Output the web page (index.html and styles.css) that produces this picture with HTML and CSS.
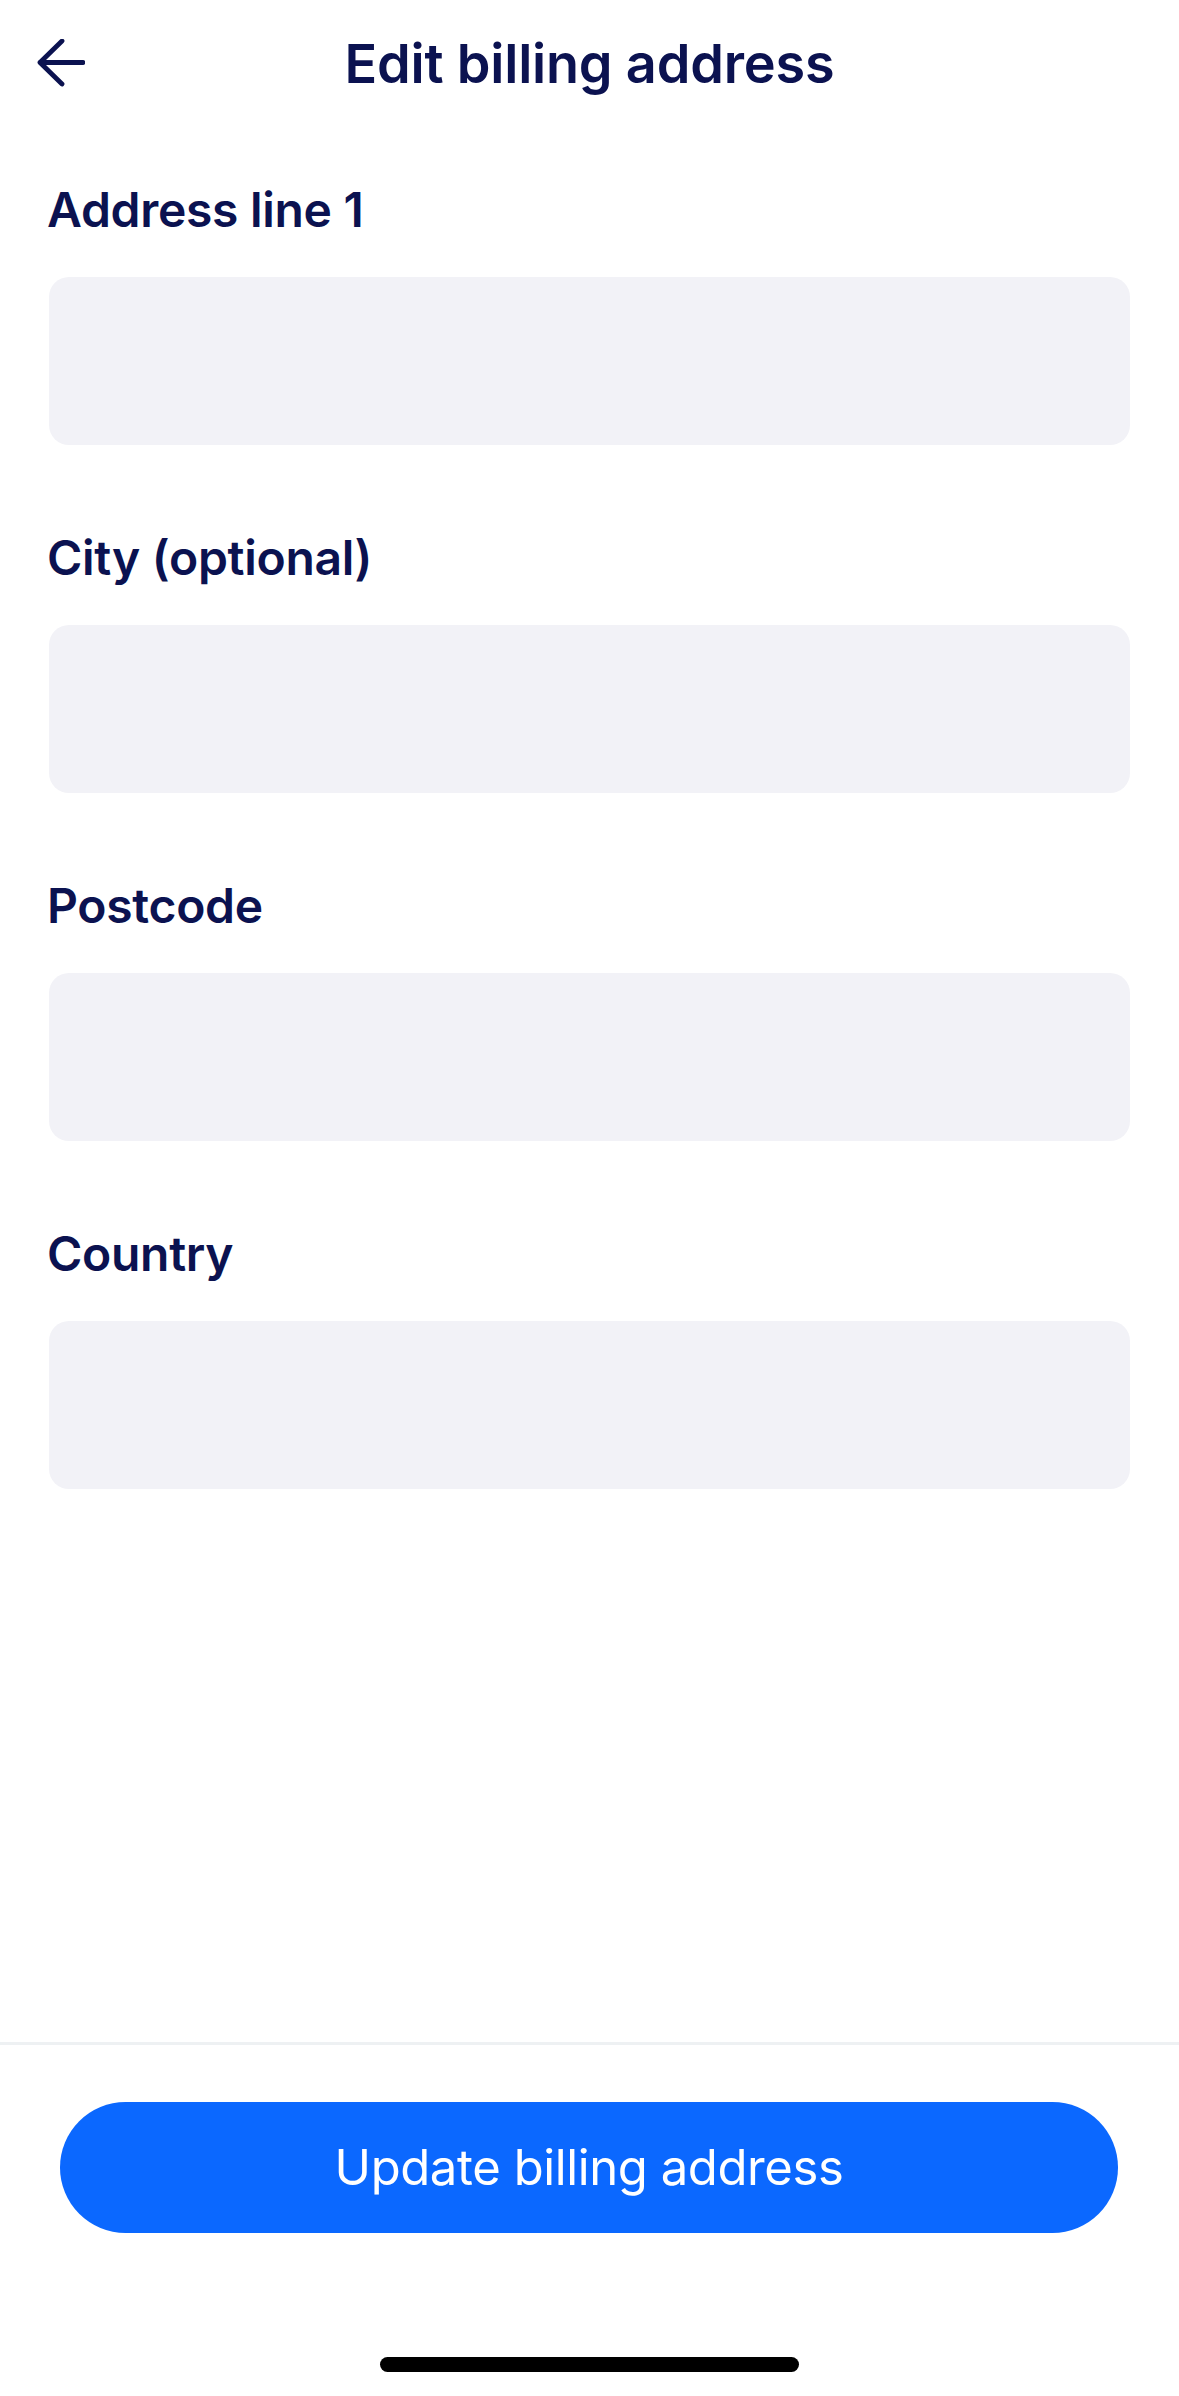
FILE: index.html
```html
<!DOCTYPE html>
<html lang="en">
<head>
<meta charset="utf-8">
<title>Edit billing address</title>
<link rel="stylesheet" href="styles.css">
</head>
<body>
<div class="screen">
  <main class="content">
    <header class="topbar">
      <button class="back" aria-label="Back">
        <svg class="back-icon" viewBox="0 0 48 48" width="48" height="48" aria-hidden="true">
          <path d="M46 23.5H3M25 2L3 23.5L25 45" fill="none" stroke="currentColor" stroke-width="4.8" stroke-linecap="round" stroke-linejoin="round"/>
        </svg>
      </button>
      <h1 class="title">Edit billing address</h1>
      <span class="spacer"></span>
    </header>
    <form class="form">
      <div class="field">
        <label class="label" for="addr1">Address line 1</label>
        <input class="input" id="addr1" type="text">
      </div>
      <div class="field">
        <label class="label" for="city">City (optional)</label>
        <input class="input" id="city" type="text">
      </div>
      <div class="field">
        <label class="label" for="postcode">Postcode</label>
        <input class="input" id="postcode" type="text">
      </div>
      <div class="field">
        <label class="label" for="country">Country</label>
        <input class="input" id="country" type="text">
      </div>
    </form>
  </main>
  <footer class="footer">
    <button class="primary" type="button">Update billing address</button>
    <div class="home-indicator"></div>
  </footer>
</div>
</body>
</html>
```
FILE: styles.css
```css
* {
  box-sizing: border-box;
}

html, body {
  margin: 0;
  padding: 0;
  background: #ffffff;
}

body {
  font-family: Inter, "Noto Sans", "Liberation Sans", sans-serif;
  color: #0b1250;
}

.screen {
  width: 1179px;
  height: 2396px;
  display: flex;
  flex-direction: column;
}

.content {
  flex: 1;
  display: flex;
  flex-direction: column;
}

.topbar {
  height: 128px;
  display: grid;
  grid-template-columns: 1fr auto 1fr;
  align-items: center;
  padding: 0 37px;
}

.back {
  justify-self: start;
  display: flex;
  padding: 0;
  margin: -3px 0 0 0;
  border: 0;
  background: none;
  color: #0b1250;
}

.back-icon {
  display: block;
  width: 48px;
  height: 48px;
}

.title {
  margin: 0;
  font-size: 54px;
  line-height: 128px;
  font-weight: 600;
  letter-spacing: -0.2px;
  white-space: nowrap;
}

.form {
  display: flex;
  flex-direction: column;
  gap: 83px;
  padding: 52px 49px 0 49px;
}

.field {
  display: flex;
  flex-direction: column;
  gap: 37px;
}

.label {
  font-size: 48px;
  line-height: 60px;
  font-weight: 600;
  letter-spacing: -0.3px;
  margin-left: -2px;
}

.input {
  display: block;
  width: 100%;
  height: 168px;
  border: 0;
  border-radius: 20px;
  background: #f2f2f7;
  margin: 0;
  padding: 0 36px;
  font: inherit;
  outline: none;
}

.footer {
  border-top: 3px solid #eef1f3;
  padding: 57px 61px 24px 60px;
  display: flex;
  flex-direction: column;
  align-items: center;
}

.primary {
  width: 100%;
  height: 131px;
  border: 0;
  border-radius: 66px;
  background: #0b68ff;
  color: #ffffff;
  font-family: Inter, "Noto Sans", "Liberation Sans", sans-serif;
  font-size: 49px;
  font-weight: 400;
  letter-spacing: -0.4px;
  padding: 0;
}

.home-indicator {
  margin-top: 124px;
  width: 419px;
  height: 15px;
  border-radius: 8px;
  background: #000000;
  position: relative;
  left: 0.5px;
}
```
